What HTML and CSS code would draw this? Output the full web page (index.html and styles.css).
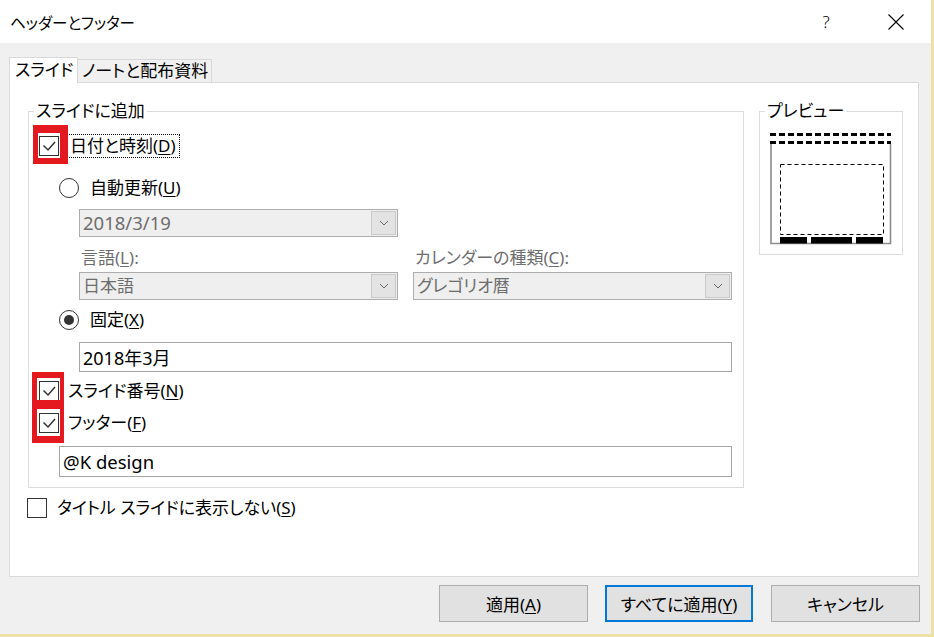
FILE: index.html
```html
<!DOCTYPE html>
<html lang="ja">
<head>
<meta charset="utf-8">
<title>ヘッダーとフッター</title>
<link rel="stylesheet" href="styles.css">
</head>
<body>
<div class="window">
  <header class="titlebar">
    <span class="title">ヘッダーとフッター</span>
    <span class="help">?</span>
    <span class="close">
      <svg width="16" height="16" viewBox="0 0 16 16"><path d="M0.5 0.5 L15.5 15.5 M15.5 0.5 L0.5 15.5" stroke="#000" stroke-width="1.1" fill="none"/></svg>
    </span>
  </header>

  <div class="tabs">
    <div class="tab active">スライド</div>
    <div class="tab">ノートと配布資料</div>
  </div>

  <section class="panel">
    <div class="panel-top">
      <fieldset class="group main-group">
        <legend>スライドに追加</legend>
        <div class="group-body">
          <div class="check-row row-date">
            <span class="box checked"><svg width="18" height="18" viewBox="0 0 18 18"><polyline points="3.5,8.5 8,13 15,5" stroke="#333" stroke-width="1.5" fill="none"/></svg></span>
            <span class="label focus">日付と時刻(<u>D</u>)</span>
            <span class="mark mark-date"></span>
          </div>

          <div class="radio-row row-auto">
            <span class="radio"></span>
            <span class="label">自動更新(<u>U</u>)</span>
          </div>

          <div class="combo disabled row-datecombo">
            <span class="combo-text latin">2018/3/19</span>
            <span class="combo-btn"><svg width="10" height="6" viewBox="0 0 10 6"><polyline points="1,1 5,5 9,1" stroke="#666" stroke-width="1" fill="none"/></svg></span>
          </div>

          <div class="pair row-labels">
            <span class="dim">言語(<u>L</u>):</span>
            <span class="dim">カレンダーの種類(<u>C</u>):</span>
          </div>

          <div class="pair row-combos">
            <div class="combo disabled">
              <span class="combo-text">日本語</span>
              <span class="combo-btn"><svg width="10" height="6" viewBox="0 0 10 6"><polyline points="1,1 5,5 9,1" stroke="#666" stroke-width="1" fill="none"/></svg></span>
            </div>
            <div class="combo disabled">
              <span class="combo-text">グレゴリオ暦</span>
              <span class="combo-btn"><svg width="10" height="6" viewBox="0 0 10 6"><polyline points="1,1 5,5 9,1" stroke="#666" stroke-width="1" fill="none"/></svg></span>
            </div>
          </div>

          <div class="radio-row row-fixed">
            <span class="radio selected"><span class="dot"></span></span>
            <span class="label">固定(<u>X</u>)</span>
          </div>

          <div class="textbox row-fixedtext">2018年3月</div>

          <div class="check-row row-number">
            <span class="box checked"><svg width="18" height="18" viewBox="0 0 18 18"><polyline points="3.5,8.5 8,13 15,5" stroke="#333" stroke-width="1.5" fill="none"/></svg></span>
            <span class="label plain">スライド番号(<u>N</u>)</span>
            <span class="mark mark-number"></span>
          </div>

          <div class="check-row row-footer">
            <span class="box checked"><svg width="18" height="18" viewBox="0 0 18 18"><polyline points="3.5,8.5 8,13 15,5" stroke="#333" stroke-width="1.5" fill="none"/></svg></span>
            <span class="label plain">フッター(<u>F</u>)</span>
            <span class="mark mark-footer"></span>
          </div>

          <div class="textbox row-footertext latin">@K design</div>
        </div>
      </fieldset>

      <fieldset class="group preview">
        <legend>プレビュー</legend>
        <svg class="preview-art" width="122" height="115" viewBox="0 0 122 115">
          <line x1="0" y1="4.5" x2="121" y2="4.5" stroke="#000" stroke-width="3" stroke-dasharray="6 3"/>
          <line x1="0" y1="12.5" x2="121" y2="12.5" stroke="#000" stroke-width="3" stroke-dasharray="6 3"/>
          <path d="M1 14 V113.5 H120.5 V14" stroke="#8c8c8c" stroke-width="1.6" fill="none"/>
          <rect x="10.5" y="34.5" width="103" height="70" stroke="#000" stroke-width="1" stroke-dasharray="4 3" fill="none"/>
          <rect x="10" y="107" width="27" height="6.5" fill="#000"/>
          <rect x="41" y="107" width="41" height="6.5" fill="#000"/>
          <rect x="86" y="107" width="27" height="6.5" fill="#000"/>
        </svg>
      </fieldset>
    </div>

    <div class="check-row row-title">
      <span class="box"></span>
      <span class="label wide">タイトル スライドに表示しない(<u>S</u>)</span>
    </div>
  </section>

  <footer class="buttons">
    <button class="btn">適用(<u>A</u>)</button>
    <button class="btn default">すべてに適用(<u>Y</u>)</button>
    <button class="btn cancel">キャンセル</button>
  </footer>
</div>
</body>
</html>
```

FILE: styles.css
```css
html, body {
  margin: 0;
  padding: 0;
}

body {
  width: 934px;
  height: 637px;
  overflow: hidden;
  font-family: "Noto Sans", "Noto Sans CJK JP", sans-serif;
  font-size: 17px;
  font-feature-settings: "palt";
  color: #000;
}

u {
  text-decoration-thickness: 1px;
  text-underline-offset: 2px;
}

.window {
  box-sizing: border-box;
  width: 934px;
  height: 637px;
  background: #f0f0f0;
  border-right: 3px solid #ebe2a4;
  border-bottom: 3px solid #ebe2a4;
  display: flex;
  flex-direction: column;
}

/* title bar */
.titlebar {
  height: 43px;
  flex: none;
  background: #fff;
  display: flex;
  align-items: center;
  padding-left: 10px;
  padding-right: 12px;
}

.title {
  flex: 1;
  font-size: 15.5px;
  line-height: 20px;
  padding-top: 2px;
}

.help {
  width: 46px;
  text-align: center;
  font-size: 17px;
  font-family: "Noto Sans", sans-serif;
  font-weight: 300;
  line-height: 20px;
  margin-right: 24px;
}

.close {
  width: 46px;
  height: 16px;
  display: flex;
  justify-content: center;
}

/* tabs */
.tabs {
  display: flex;
  align-items: flex-end;
  margin: 13px 0 0 9px;
  height: 26px;
  flex: none;
}

.tab {
  box-sizing: border-box;
  height: 23px;
  border: 1px solid #d9d9d9;
  border-bottom: none;
  background: #f0f0f0;
  line-height: 22px;
  padding-left: 4px;
  width: 134px;
  border-left: none;
}

.tab.active {
  width: 69px;
  height: 26px;
  border-left: 1px solid #d9d9d9;
  background: #fff;
  padding-left: 5px;
  line-height: 23px;
  margin-bottom: -1px;
  position: relative;
  z-index: 1;
}

/* tab page */
.panel {
  box-sizing: border-box;
  margin-left: 9px;
  width: 910px;
  height: 495px;
  flex: none;
  background: #fff;
  border: 1px solid #d9d9d9;
  padding: 18px 15px 0 18px;
}

.panel-top {
  display: flex;
  gap: 15px;
  align-items: flex-start;
}

.group {
  box-sizing: border-box;
  margin: 0;
  padding: 0;
  border: 1px solid #dcdcdc;
  min-width: 0;
}

.group legend {
  padding: 0 2px;
  margin-left: 5px;
  line-height: 20px;
}

.main-group {
  width: 716px;
  height: 387px;
}

.group-body {
  padding: 13px 11px 10px 10px;
  display: flex;
  flex-direction: column;
}

.preview {
  width: 144px;
  height: 154px;
}

.preview-art {
  display: block;
  margin: 9px 0 0 10px;
}

/* check boxes and radio buttons */
.check-row,
.radio-row {
  display: flex;
  align-items: center;
  height: 24px;
  position: relative;
}

.box {
  box-sizing: border-box;
  width: 20px;
  height: 20px;
  flex: none;
  border: 1px solid #333;
  background: #fff;
  display: flex;
}

.label {
  line-height: 22px;
  white-space: nowrap;
}

.label.focus {
  box-sizing: border-box;
  height: 24px;
  margin-left: 8px;
  padding: 0 3px 0 2px;
  border: 1px dotted #000;
}

.label.plain {
  margin-left: 9px;
}

.radio {
  box-sizing: border-box;
  width: 20px;
  height: 20px;
  flex: none;
  border: 1px solid #333;
  border-radius: 50%;
  background: #fff;
  display: flex;
  align-items: center;
  justify-content: center;
}

.radio .dot {
  width: 10px;
  height: 10px;
  border-radius: 50%;
  background: #333;
}

.radio-row {
  margin-left: 20px;
}

.radio-row .label {
  margin-left: 11px;
}

.row-auto { margin-top: 18px; }
.row-datecombo { margin-top: 9px; margin-left: 40px; width: 319px; }
.row-labels { margin-top: 10px; height: 22px; align-items: center; }
.row-combos { margin-top: 3px; }
.row-fixed { margin-top: 8px; }
.row-fixedtext { margin-top: 10px; margin-left: 40px; width: 653px; height: 30px; font-size: 18px; }
.row-number { margin-top: 7px; }
.row-footer { margin-top: 8px; }
.row-footertext { margin-top: 11px; margin-left: 20px; width: 673px; height: 31px; }

.latin {
  font-size: 18.5px;
}

.pair {
  display: grid;
  grid-template-columns: 319px 319px;
  column-gap: 15px;
  margin-left: 40px;
}

.row-labels .dim {
  padding-left: 2px;
  line-height: 22px;
}

.dim {
  color: #6d6d6d;
}

/* combo boxes */
.combo {
  box-sizing: border-box;
  height: 28px;
  border: 1px solid #adadad;
  display: flex;
  align-items: stretch;
}

.combo.disabled {
  background: #efefef;
  color: #6d6d6d;
}

.combo-text {
  flex: 1;
  padding-left: 3px;
  line-height: 26px;
}

.combo-btn {
  box-sizing: border-box;
  width: 25px;
  margin: 1px;
  border: 1px solid #c9c9c9;
  background: #e3e3e3;
  display: flex;
  align-items: center;
  justify-content: center;
}

/* text boxes */
.textbox {
  box-sizing: border-box;
  border: 1px solid #a6a6a6;
  background: #fff;
  padding-left: 3px;
  display: flex;
  align-items: center;
}

/* red highlight frames drawn over the ticked boxes */
.mark {
  position: absolute;
  box-sizing: border-box;
  border-style: solid;
  border-color: #e3191f;
  pointer-events: none;
}

.mark-date {
  left: -6px;
  top: -9px;
  width: 35px;
  height: 39px;
  border-width: 8px 8px 6px 5px;
}

.mark-number {
  left: -7px;
  top: -7px;
  width: 32px;
  height: 32px;
  border-width: 6px 4px 4px 5px;
}

.mark-footer {
  left: -7px;
  top: -7px;
  width: 32px;
  height: 39px;
  border-width: 5px 4px 7px 5px;
}

/* bottom of the page */
.row-title {
  margin-top: 8px;
  margin-left: -1px;
}

.row-title .label {
  margin-left: 10px;
}

/* dialog buttons */
.buttons {
  display: flex;
  justify-content: flex-end;
  margin-top: 8px;
  padding-right: 11px;
}

.btn {
  box-sizing: border-box;
  width: 149px;
  height: 37px;
  margin: 0;
  padding: 0;
  background: #e1e1e1;
  border: 1px solid #adadad;
  font: inherit;
  font-feature-settings: "palt";
  color: #000;
}

.btn.default {
  width: 148px;
  margin-left: 17px;
  border: 2px solid #0078d7;
}

.btn.cancel {
  margin-left: 18px;
}
```
